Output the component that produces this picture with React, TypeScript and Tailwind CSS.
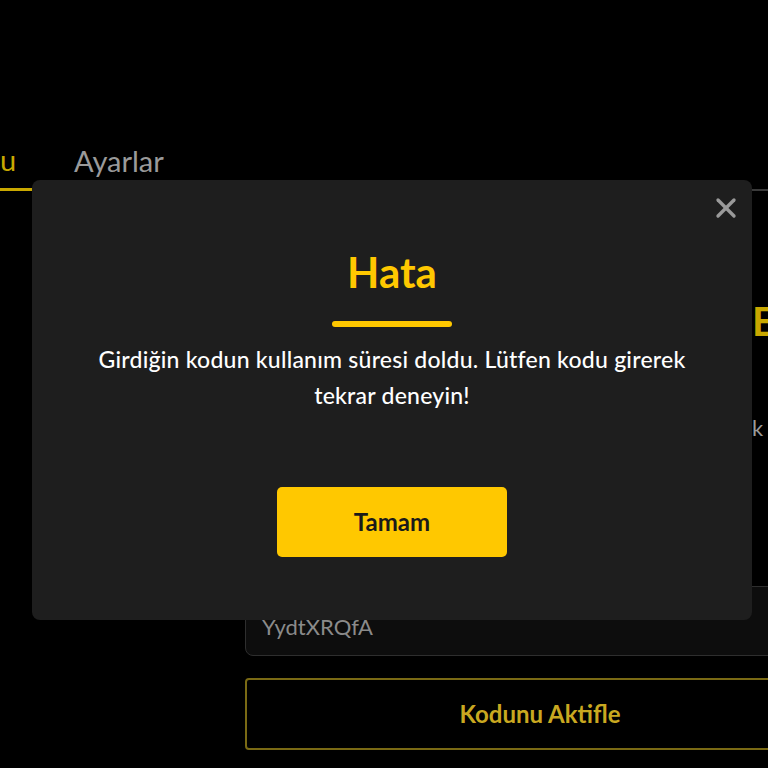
import { X } from "lucide-react";

const ErrorModal = () => {
	return (
		<div className="fixed left-[32px] top-[180px] w-[720px] h-[440px] bg-[#1e1e1e] rounded-lg flex flex-col items-center pt-[70px]">
			<button className="absolute right-[10px] top-[12px] text-[#9a9a9a]">
				<X size={32} strokeWidth={2.5} />
			</button>
			<h2 className="text-[42px] leading-[44px] font-bold text-[#ffc800]">Hata</h2>
			<div className="mt-[27px] w-[120px] h-[6px] rounded-full bg-[#ffc800]" />
			<p className="mt-[14px] w-[630px] text-center text-white text-[23px] tracking-[0.01em] leading-[36px] font-medium">
				Girdiğin kodun kullanım süresi doldu. Lütfen kodu girerek tekrar deneyin!
			</p>
			<button className="mt-[74px] w-[230px] h-[70px] rounded-[5px] bg-[#ffc800] text-[24px] font-bold text-[#1a1a1a]">
				Tamam
			</button>
		</div>
	);
};

export default function App() {
	return (
		<div className="min-h-screen w-full bg-black overflow-hidden font-['Lato',sans-serif]">
			<div className="pt-[138px] flex items-end border-b-2 border-[#3a3a3a]">
				<div className="w-[32px] border-b-[3px] border-[#c9a800] -mb-[2px] pb-[6px] text-[29px] text-[#c9a800]">u</div>
				<div className="ml-[42px] pb-[6px] text-[29px] text-[#9a9a9a]">Ayarlar</div>
			</div>

			<div className="ml-[245px] flex flex-col">
				<div className="mt-[108px] ml-[507px] text-[40px] font-bold text-[#c9a800] leading-[44px]">E</div>
				<div className="mt-[68px] ml-[507px] text-[22px] text-[#9a9a9a]">k</div>
				<div className="mt-[142px] h-[70px] w-[590px] rounded-lg border border-[#2e2e2e] bg-[#0d0d0d] flex items-end px-[16px] pb-[12px] text-[22px] text-[#8a8a8a]">
					YydtXRQfA
				</div>
				<button className="mt-[22px] h-[72px] w-[590px] rounded-[4px] border-2 border-[#7a6a14] text-[24px] font-bold text-[#c9a820]">
					Kodunu Aktifle
				</button>
			</div>

			<ErrorModal />
		</div>
	);
}
